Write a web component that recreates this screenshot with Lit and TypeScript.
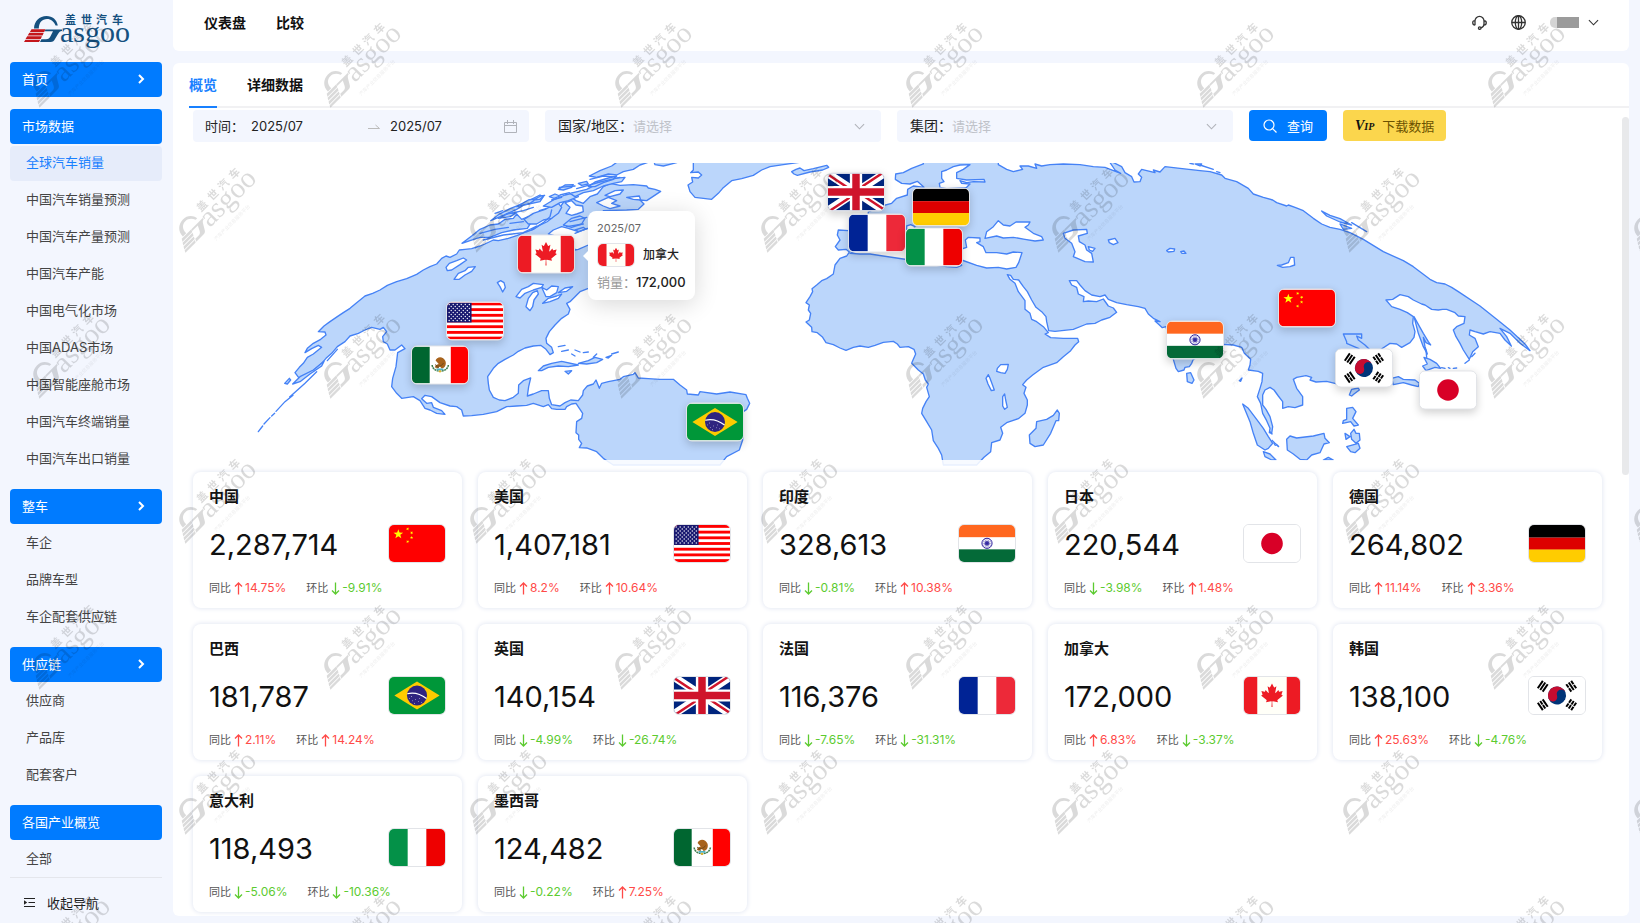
import { LitElement, html, css, svg } from "lit";
import { customElement, property } from "lit/decorators.js";
import { styleMap } from "lit/directives/style-map.js";
import { classMap } from "lit/directives/class-map.js";

type Change = number;
interface Country {
  code: string;
  name: string;
  sales: string;
  yoy: Change;
  mom: Change;
  /** centre of the pin on the map, in map units */
  x: number;
  y: number;
}

const MAP = { x: 193, y: 163, w: 1409, h: 309 };

const COUNTRIES: Country[] = [
  { code: "cn", name: "中国", sales: "2,287,714", yoy: 14.75, mom: -9.91, x: 1307, y: 308 },
  { code: "us", name: "美国", sales: "1,407,181", yoy: 8.2, mom: 10.64, x: 475, y: 321 },
  { code: "in", name: "印度", sales: "328,613", yoy: -0.81, mom: 10.38, x: 1195, y: 340 },
  { code: "jp", name: "日本", sales: "220,544", yoy: -3.98, mom: 1.48, x: 1448, y: 390 },
  { code: "de", name: "德国", sales: "264,802", yoy: 11.14, mom: 3.36, x: 941, y: 207 },
  { code: "br", name: "巴西", sales: "181,787", yoy: 2.11, mom: 14.24, x: 715, y: 422 },
  { code: "gb", name: "英国", sales: "140,154", yoy: -4.99, mom: -26.74, x: 856, y: 192 },
  { code: "fr", name: "法国", sales: "116,376", yoy: -7.65, mom: -31.31, x: 877, y: 233 },
  { code: "ca", name: "加拿大", sales: "172,000", yoy: 6.83, mom: -3.37, x: 546, y: 254 },
  { code: "kr", name: "韩国", sales: "138,100", yoy: 25.63, mom: -4.76, x: 1364, y: 368 },
  { code: "it", name: "意大利", sales: "118,493", yoy: -5.06, mom: -10.36, x: 934, y: 247 },
  { code: "mx", name: "墨西哥", sales: "124,482", yoy: -0.22, mom: 7.25, x: 440, y: 365 },
];

const NAV = [
  { title: "首页", arrow: true, items: [] as string[] },
  {
    title: "市场数据",
    arrow: false,
    items: ["全球汽车销量", "中国汽车销量预测", "中国汽车产量预测", "中国汽车产能", "中国电气化市场", "中国ADAS市场", "中国智能座舱市场", "中国汽车终端销量", "中国汽车出口销量"],
  },
  { title: "整车", arrow: true, items: ["车企", "品牌车型", "车企配套供应链"] },
  { title: "供应链", arrow: true, items: ["供应商", "产品库", "配套客户"] },
  { title: "各国产业概览", arrow: false, items: ["全部"] },
];

const star = (cx: number, cy: number, r: number, turn = 0) => {
  const pts: string[] = [];
  for (let i = 0; i < 10; i++) {
    const a = ((i * 36 - 90 + turn) * Math.PI) / 180;
    const q = i % 2 ? r * 0.4 : r;
    pts.push(`${(cx + q * Math.cos(a)).toFixed(2)},${(cy + q * Math.sin(a)).toFixed(2)}`);
  }
  return pts.join(" ");
};

const vertical = (a: string, b: string, c: string) => svg`
  <rect width="57" height="38" fill=${b}/><rect width="19" height="38" fill=${a}/><rect x="38" width="19" height="38" fill=${c}/>`;

const trigram = (x: number, y: number, turn: number, bars: number[]) => svg`
  <g transform=${`translate(${x} ${y}) rotate(${turn})`} fill="#000">
    ${bars.map((solid, i) => solid
      ? svg`<rect x="-4.6" y=${i * 3 - 4} width="9.2" height="2"/>`
      : svg`<rect x="-4.6" y=${i * 3 - 4} width="4.2" height="2"/><rect x="0.4" y=${i * 3 - 4} width="4.2" height="2"/>`)}
  </g>`;

const LEAF = "m4890 4430-45-863a95 95 0 0 1 111-98l859 151-116-320a65 65 0 0 1 20-73l941-762-212-99a65 65 0 0 1-34-79l186-572-542 115a65 65 0 0 1-73-38l-105-247-423 454a65 65 0 0 1-111-57l204-1052-327 189a65 65 0 0 1-91-27l-332-652-332 652a65 65 0 0 1-91 27l-327-189 204 1052a65 65 0 0 1-111 57l-423-454-105 247a65 65 0 0 1-73 38l-542-115 186 572a65 65 0 0 1-34 79l-212 99 941 762a65 65 0 0 1 20 73l-116 320 859-151a95 95 0 0 1 111 98l-45 863z";

const FLAGS: Record<string, () => unknown> = {
  cn: () => svg`<rect width="57" height="38" fill="#f00"/>
    <g fill="#ff0"><polygon points=${star(9.5, 9.5, 5.2)}/><polygon points=${star(19, 4, 1.8, 20)}/><polygon points=${star(23, 8, 1.8, 40)}/><polygon points=${star(23, 13, 1.8)}/><polygon points=${star(19, 17, 1.8, 20)}/></g>`,
  us: () => svg`<rect width="57" height="38" fill="#fff"/>
    ${[0, 1, 2, 3, 4, 5, 6].map((i) => svg`<rect y=${(i * 76) / 13} width="57" height=${38 / 13} fill="#f00"/>`)}
    <rect width="25" height="20.5" fill="#191970"/>
    ${[0, 1, 2, 3, 4, 5, 6, 7, 8].map((r) => (r % 2 ? [0, 1, 2, 3, 4] : [0, 1, 2, 3, 4, 5]).map((c) => svg`<circle cx=${2.2 + c * 4.1 + (r % 2 ? 2.05 : 0)} cy=${2 + r * 2.06} r="0.7" fill="#fff"/>`))}`,
  in: () => svg`<rect width="57" height="38" fill="#fff"/><rect width="57" height="12.5" fill="#ff671f"/><rect y="25" width="57" height="13" fill="#046a38"/>
    <circle cx="28.5" cy="18.8" r="5.2" fill="none" stroke="#2a1f9c" stroke-width="1"/><circle cx="28.5" cy="18.8" r="2.4" fill="#2a1f9c" fill-opacity=".75"/>
    <g stroke="#2a1f9c" stroke-width=".4">${[0, 30, 60, 90, 120, 150].map((a) => svg`<path d="M23.5 18.8h10" transform=${`rotate(${a} 28.5 18.8)`}/>`)}</g>`,
  jp: () => svg`<rect width="57" height="38" fill="#fff"/><circle cx="28.5" cy="19" r="11" fill="#d80027"/>`,
  de: () => svg`<rect width="57" height="13" fill="#000"/><rect y="13" width="57" height="12.5" fill="#d00"/><rect y="25.2" width="57" height="12.8" fill="#fc0"/>`,
  br: () => svg`<rect width="57" height="38" fill="#009739"/><path d="M5.5 19 28.5 4.5 51.5 19 28.5 33.5Z" fill="#fecb00"/><circle cx="28.5" cy="19" r="10.2" fill="#2f2480"/>
    <path d="M18.6 17.2c7-1.6 14 .6 19.6 5" fill="none" stroke="#fff" stroke-width="1.3"/>
    <g fill="#fff">${[[21, 22], [24, 24.5], [27, 23], [30, 25], [33, 26], [26, 27], [31, 22], [23, 20]].map(([x, y]) => svg`<circle cx=${x} cy=${y} r=".45"/>`)}</g>`,
  gb: () => svg`<rect width="57" height="38" fill="#00247d"/>
    <path d="M0 0 57 38M57 0 0 38" stroke="#fff" stroke-width="8"/>
    <path d="M0 1 28 19.7M57 37 29 18.3M57 -1.5 29 17.2M0 39.5 28 20.8" stroke="#cf142b" stroke-width="2.5"/>
    <path d="M28.5 0v38M0 19h57" stroke="#fff" stroke-width="12.5"/><path d="M28.5 0v38M0 19h57" stroke="#cf142b" stroke-width="7.6"/>`,
  fr: () => vertical("#002395", "#fff", "#ed2939"),
  it: () => vertical("#049148", "#fff", "#e00"),
  ca: () => svg`<rect width="57" height="38" fill="#fffff8"/><rect width="13.5" height="38" fill="#ed1b24"/><rect x="43.5" width="13.5" height="38" fill="#ed1b24"/>
    <path transform="translate(-.3 4.2) scale(.006)" d=${LEAF} fill="#ed1b24"/>`,
  kr: () => svg`<rect width="57" height="38" fill="#fff"/>
    <g transform="rotate(-20 28.5 19)"><circle cx="28.5" cy="19" r="9.2" fill="#003478"/><path d="M19.3 19a9.2 9.2 0 0 1 18.4 0a4.6 4.6 0 0 0-9.2 0a4.6 4.6 0 0 1-9.2 0Z" fill="#c60c30"/></g>
    ${trigram(14, 9.5, -56, [1, 1, 1])}${trigram(43, 9.5, 56, [0, 1, 0])}${trigram(14, 28.5, 56, [1, 0, 1])}${trigram(43, 28.5, -56, [0, 0, 0])}`,
  mx: () => svg`<rect width="57" height="38" fill="#fff"/><rect width="18" height="38" fill="#006630"/><rect x="39.5" width="17.5" height="38" fill="#f00"/>
    <path d="M20.5 19c.8 8.5 15.5 8.5 16.5 0" fill="none" stroke="#3f7d4e" stroke-width="1.6" stroke-dasharray="2 .6"/>
    <path d="M24 14.5c1-4.500 8-5 10 .5 1.300 3.500-.5 7.500-4 7.500-1-2.500-3.500-2-4.500.6-1-2-1.500-1.500-2.300-1 .2-2.500 2-3.500 4-4Z" fill="#a8631c"/>
    <path d="M23.500 18.500c2 2.500 7 2 8.500-1.500M24.500 20.500l3 1.500" fill="none" stroke="#6e4a1a" stroke-width="1"/>
    <path d="M25 23.500h7" stroke="#4fb3c4" stroke-width="1.800"/><circle cx="28.500" cy="25.500" r="1.200" fill="#e3b229"/>`,
};

@customElement("country-flag")
export class CountryFlag extends LitElement {
  @property() code = "cn";
  static styles = css`
    :host { display: block; box-sizing: border-box; width: 58px; height: 39px; border: 1px solid #e2e4e8; border-radius: 6px; overflow: hidden; background: #fff; }
    svg { display: block; width: 100%; height: 100%; }
  `;
  render() {
    return html`<svg viewBox="0 0 57 38" preserveAspectRatio="none" aria-hidden="true">${FLAGS[this.code]()}</svg>`;
  }
}

const emblem = (blue: string, red: string) => svg`
  <path fill=${blue} d="M34 28.500C34.200 21 39.500 16 46.500 16C52.500 16 56.800 19.800 57.800 25.500L55.600 25.500C53.800 21.500 51 19 47 19C42 19 39 22.500 38.800 28.500Z"/>
  <path fill=${blue} d="M45.500 29.400H62V31C60 31.200 59.300 31.800 58 34L55 39C54 41 53 42 50.500 42H40L41.400 39.200H46C48.500 39.200 49.500 38.200 50.500 36.200L53 31.200H44.700Z"/>
  <path fill=${red} d="M31.500 29.300H45.500L44.200 31.900H29.900ZM29.300 32.800H43.800L42.500 35.400H27.700ZM27.200 36.300H42L40.700 38.900H25.600ZM25.400 39.700H40.300L39 42.100H24Z"/>
  <text x="60" y="42" font-family="'Liberation Serif', serif" font-size="30" fill=${blue}>asgoo</text>
  <text x="65 81 96 112" y="24" font-family="'Noto Sans CJK SC', sans-serif" font-weight="700" font-size="11" fill=${blue}>盖世汽车</text>`;

const mark = (x: number, y: number) => svg`
  <g transform=${`translate(${x} ${y}) rotate(-45) scale(.97) translate(-25 -42)`}>
    ${emblem("#000", "#000")}
    <text x="55" y="56" font-family="'Noto Sans CJK SC', sans-serif" font-size="5" opacity=".5">汽车产业信息服务平台</text>
  </g>`;

const chevron = html`<svg class="chev" viewBox="0 0 12 12" aria-hidden="true"><path d="M1 3.500 6 8.500 11 3.500" /></svg>`;

/* Coast lines. Each sheet is drawn at three units to one map unit. */
const WEST_LAND = [
  "M135 668L148 652L160 640L172 622L190 612L215 592L205 586L185 596L165 608L172 595L190 580L212 568L228 555L225 546L205 545L222 528L240 515L262 500L280 488L300 475L320 458L345 438L368 430L390 420L412 406L440 395L470 386L500 373L520 360L540 350L560 342L575 325L588 318L600 322L620 312L628 300L645 298L665 296L690 288L705 282L730 270L745 272L775 265L800 257L828 246L850 238L868 226L890 216L905 205L915 180L930 172L945 150L960 140L978 152L1000 160L1020 140L1042 132L1060 110L1080 100L1110 106L1150 104L1190 108L1195 114L1215 118L1232 124L1205 142L1190 152L1170 150L1182 162L1165 178L1130 180L1060 182L1055 200L1130 220L1140 260L1120 300L1100 350L1060 390L1015 415L990 425L975 440L960 455L950 460L960 478L955 492L935 505L915 525L898 545L888 565L890 580L905 592L910 608L900 614L888 598L872 586L850 588L825 594L805 604L790 615L765 628L745 640L730 655L713 680L715 700L718 720L730 742L748 750L765 752L790 742L805 730L806 705L820 692L842 684L836 710L832 738L850 732L875 722L895 722L898 745L905 764L930 768L945 758L962 750L985 752L998 735L1000 722L1012 708L1030 702L1038 690L1048 715L1055 700L1075 695L1110 688L1120 680L1150 673L1155 668L1165 684L1195 686L1230 688L1270 688L1290 705L1310 720L1312 732L1345 735L1350 725L1400 732L1440 726L1488 734L1492 745L1499 760L1490 778L1480 785L1478 870L1468 900L1430 920L1410 945L1090 945L1060 925L1040 905L1010 894L988 893L995 880L986 868L986 855L978 848L980 815L995 805L998 790L988 775L978 760L965 762L950 770L945 778L920 778L905 776L895 764L880 770L850 760L830 766L800 768L770 770L740 785L700 793L665 797L640 798L635 780L620 770L600 768L570 758L545 740L525 736L515 746L530 760L545 758L550 772L575 782L585 793L560 790L540 780L525 775L510 752L490 740L455 745L440 730L425 710L428 685L438 650L443 608L465 596L455 585L435 600L420 600L412 582L400 575L398 560L410 545L400 532L390 538L365 532L345 540L325 550L300 558L285 575L262 590L245 610L228 625L215 640L190 662L165 675L150 688Z",
  "M636 280L665 258L690 238L720 225L745 222L765 208L790 205L800 192L815 208L835 200L845 215L832 235L790 240L755 248L720 262L690 262L660 272Z",
  "M722 212L760 196L800 178L822 165L870 155L880 140L870 135L820 160L780 176L745 194Z",
  "M822 208L850 190L885 178L905 168L925 160L935 172L925 190L905 205L880 210L860 222L835 222Z",
  "M880 168L910 150L945 135L975 128L985 140L955 152L930 158L905 172Z",
  "M925 118L945 105L970 104L965 112L940 120ZM898 140L915 132L930 138L912 145ZM985 100L1010 94L1015 102L995 106Z",
  "M1018 78L1050 62L1085 48L1110 30L1215 30L1170 45L1150 58L1120 65L1100 75L1075 72L1040 82Z",
  "M960 130L1010 118L1050 98L1090 85L1125 82L1115 95L1090 100L1060 108L1030 122L1000 128L975 140Z",
  "M1015 110L1035 96L1075 84L1100 78L1090 88L1060 98L1035 110ZM1210 30L1280 38L1240 48L1215 44Z",
  "M940 225L965 205L990 198L1005 205L995 222L965 232ZM975 240L1000 232L1010 240L990 246ZM973 285L983 281L986 290L977 296Z",
  "M1330 30L1330 60L1322 68L1345 66L1355 75L1345 84L1325 82L1328 96L1314 105L1320 125L1335 142L1360 145L1385 148L1405 130L1418 115L1445 92L1475 86L1510 76L1535 60L1560 50L1600 44L1655 36L1655 30Z",
  "M865 662L880 648L905 640L935 634L985 645L955 650L925 648L895 652L875 662ZM985 640L1015 632L1035 622L1058 628L1040 638L1010 642ZM945 664L965 662L955 672ZM1068 622L1085 616L1075 624Z",
  "M104 700L118 685L122 690L112 702Z",
  "M128 702L150 680L190 660L222 634L215 648L180 672L150 695Z",
  "M745 205L775 190L800 188L780 200ZM800 170L835 150L860 146L840 160ZM850 150L872 138L884 136L870 148Z",
];
const WEST_LINES = "M25 845L38 828M42 822L60 803M65 798L74 790M78 784L105 755L130 735L118 742L140 722L165 700L200 665M232 632L262 598M925 590L945 586M935 604L955 600M975 600L990 606M1000 608L1015 606M1030 622L1040 612M1085 612L1105 606M965 612L975 618M868 182L888 176M735 190L758 182M690 250L735 238L775 232M780 220L820 215M928 112L975 108M980 116L1050 96L1110 82M1020 88L1060 78L1090 80M930 135L958 128M905 150L935 142M770 192L820 182L850 172M845 240L880 218L900 200L905 180M700 270L760 255L820 248L860 228M960 215L1010 202M950 230L1000 222M975 250L1012 235";
const WEST_WATER = [
  "M895 252L910 240L935 230L955 235L985 245L1015 235L1030 260L1015 285L985 298L975 300L965 270L930 262Z",
  "M948 190L960 172L945 158L965 152L978 165L998 168L1000 185L980 192L965 196Z",
  "M1040 158L1075 142L1100 152L1085 160L1110 168L1080 176L1060 168ZM1065 136L1095 122L1120 120L1110 132L1080 140ZM1130 142L1168 138L1172 150L1150 148Z",
  "M588 352L598 340L620 332L640 324L650 330L630 344L605 360L592 362Z",
  "M612 388L625 370L645 362L655 352L676 350L665 364L645 375L628 388Z",
  "M742 398L752 392L762 398L766 412L758 426L750 410Z",
  "M798 440L815 418L835 410L850 400L880 404L875 412L850 420L825 430L810 444Z",
  "M828 470L835 445L848 428L862 422L865 432L852 450L848 470L840 482Z",
  "M875 412L890 420L905 408L925 410L920 428L900 440L888 440Z",
  "M878 460L895 445L920 438L935 432L925 445L900 455ZM925 428L945 414L968 410L950 424Z",
];
const EAST_LAND = [
  "M208 306L200 318L180 325L165 345L160 372L140 386L125 392L110 405L96 416L98 425L90 440L78 458L88 465L85 480L92 490L88 510L78 516L95 532L96 545L112 548L128 562L138 578L160 584L180 594L198 601L220 592L240 588L265 592L285 586L310 577L340 574L352 582L360 592L385 590L402 598L407 612L400 628L395 640L415 660L430 672L436 690L445 702L440 712L448 740L438 755L428 775L425 790L440 815L455 840L460 872L475 895L485 915L490 945L590 945L612 922L632 905L635 878L660 870L668 850L662 832L680 818L715 806L735 790L742 765L742 750L732 730L738 712L728 704L740 690L758 675L790 652L830 638L850 620L872 602L885 585L896 575L893 565L850 565L812 563L795 552L805 548L790 530L770 515L755 508L750 490L735 478L735 452L715 425L705 400L690 388L682 374L692 376L700 388L716 390L730 410L742 425L755 450L768 472L785 485L798 500L800 515L806 542L825 544L880 538L920 522L945 520L965 510L990 502L1010 487L1000 474L985 468L970 447L950 455L925 453L910 455L912 440L895 432L890 412L875 405L868 392L890 392L900 405L915 422L935 435L960 440L975 435L985 448L1010 458L1040 464L1075 470L1095 475L1105 492L1120 505L1140 515L1125 513L1135 522L1147 533L1158 530L1180 628L1188 655L1195 665L1212 660L1215 652L1228 650L1235 640L1240 628L1328 583L1360 585L1385 592L1393 610L1412 628L1410 645L1405 660L1435 664L1448 670L1446 695L1440 715L1432 740L1442 760L1448 790L1460 812L1470 835L1468 848L1475 850L1478 830L1470 800L1458 778L1448 765L1448 735L1455 720L1470 712L1482 720L1495 738L1508 755L1508 775L1525 770L1545 773L1568 765L1568 740L1550 715L1540 688L1550 682L1578 677L1595 682L1590 690L1608 696L1640 694L1680 704L1740 650L1770 610L1768 598L1755 585L1735 570L1730 558L1745 565L1745 552L1690 552L1700 575L1700 580L1735 595L1780 640L1800 600L1830 580L1850 582L1865 592L1890 578L1902 562L1905 545L1898 520L1900 500L1882 488L1860 478L1835 470L1818 450L1838 448L1860 434L1885 440L1900 450L1925 462L1935 465L1955 478L1975 480L1988 478L2000 478L2025 488L2035 498L2055 500L2052 520L2030 530L2020 540L2028 560L2040 580L2050 600L2068 628L2078 605L2095 590L2085 565L2068 555L2070 540L2085 545L2110 552L2130 545L2160 550L2175 570L2194 588L2180 560L2160 535L2190 550L2220 580L2250 602L2235 582L2190 540L2150 508L2100 468L2035 425L2015 412L1995 402L1970 398L1950 388L1900 350L1870 332L1810 305L1750 268L1710 248L1680 238L1650 232L1625 222L1600 205L1570 182L1545 172L1525 165L1520 168L1490 158L1478 150L1450 142L1420 132L1405 115L1370 95L1335 85L1325 75L1290 65L1260 62L1200 55L1155 50L1140 66L1120 60L1125 68L1085 58L1075 72L1085 82L1080 95L1062 96L1055 80L1035 68L1025 50L985 30L1005 60L1022 70L975 52L940 50L900 44L850 42L810 44L785 48L765 42L770 55L745 48L720 48L728 58L700 65L680 58L655 44L655 30L430 30L430 42L395 55L370 68L347 72L346 88L365 100L390 102L412 94L432 112L400 108L383 118L382 135L350 145L335 160L305 168L265 186L262 230L205 242L175 240L172 255L180 270L166 290L175 300L198 298Z",
  "M35 65L48 58L60 54L72 62L100 56L140 46L146 52L128 60L90 66L52 76L42 72Z",
  "M748 855L768 835L770 815L800 808L820 796L832 780L838 790L836 812L828 812L812 850L790 885L765 890L750 880Z",
  "M1220 670L1232 668L1242 690L1236 700L1222 695Z",
  "M1388 762L1405 775L1430 808L1450 835L1465 860L1478 880L1465 895L1455 900L1432 885L1420 850L1410 815Z",
  "M1450 905L1470 912L1488 930L1475 930L1455 920ZM1475 870L1485 880L1495 888",
  "M1520 868L1530 858L1550 864L1600 858L1632 850L1635 865L1648 878L1632 882L1620 908L1595 915L1580 930L1560 928L1540 912L1522 900Z",
  "M1700 775L1718 772L1728 785L1718 805L1735 825L1722 828L1712 815L1688 820L1690 812L1700 808ZM1695 850L1710 860L1698 868ZM1712 850L1722 838L1728 850L1738 850L1740 870L1728 880L1715 868ZM1700 890L1735 880L1740 895L1725 908L1712 905Z",
  "M1708 735L1715 718L1735 714L1738 720L1722 732L1715 738ZM1630 930L1645 922L1660 930Z",
  "M1902 500L1912 518L1930 550L1945 575L1952 585L1938 578L1930 562L1935 590L1942 612L1930 590L1915 550Z",
  "M1932 622L1950 628L1970 640L1982 655L1965 652L1938 662L1928 648L1942 642ZM1835 685L1855 680L1870 688L1905 690L1918 700L1915 710L1895 705L1870 698L1840 704Z",
  "M1625 183L1650 196L1680 206L1715 225L1680 216L1640 198ZM1680 222L1715 235L1690 238ZM1378 692L1386 684L1382 694ZM1245 42L1265 42L1260 48Z",
];
const EAST_LINES = "M1715 218L1760 245M1985 653L1995 655M2005 653L2010 655M2020 655L2030 654M2055 640L2068 630M2075 620L2085 610M1938 600L1940 622M1260 45L1300 58M1310 65L1320 68M1230 40L1240 42M1470 845L1476 852M1482 880L1486 886M1490 885L1496 890";
const EAST_WATER = [
  "M540 45L520 50L500 60L485 65L485 85L492 95L478 100L480 112L500 116L560 112L570 102L545 100L540 92L560 98L580 95L615 96L612 88L560 90L530 85L530 68L550 58L570 44Z",
  "M615 265L620 245L640 230L655 212L670 225L690 228L708 216L750 216L745 225L735 232L760 250L785 260L790 270L765 273L735 268L700 262L670 264L650 258Z",
  "M850 250L880 240L920 238L922 250L895 258L898 275L915 285L920 300L935 310L940 336L915 335L880 320L885 305L875 280L855 265Z",
  "M925 290L945 295L938 304L928 300ZM985 270L1005 265L1014 278L1000 284L988 278ZM1160 302L1170 295L1184 297L1182 304L1165 306ZM1202 305L1212 303L1218 310L1206 310Z",
  "M535 300L560 292L556 270L565 262L600 264L600 275L590 278L610 290L618 308L650 308L680 312L700 306L726 308L716 338L708 352L680 357L655 352L620 354L590 346L545 330Z",
  "M210 310L250 296L380 288L390 330L270 312L240 312ZM470 346L500 350L530 352L545 346L540 330L470 330ZM380 228L392 224L405 230L400 240L380 240Z",
  "M652 655L662 644L685 643L682 658L675 670L662 668L650 664ZM618 685L625 674L630 685L643 720L634 722L624 702ZM668 740L674 732L677 750L682 772L674 778L668 768Z",
  "M1492 346L1505 345L1525 338L1532 322L1542 322L1544 345L1530 350L1508 352Z",
];

@customElement("sales-map")
export class SalesMap extends LitElement {
  static styles = css`
    :host { display: block; }
    .stage { position: relative; width: 100%; aspect-ratio: 1409 / 309; }
    .world { display: block; width: 100%; height: 100%; }
    .land { fill: #bbd6fb; stroke: #4582f6; stroke-width: 4; stroke-linejoin: round; }
    .water { fill: #fff; stroke: #4582f6; stroke-width: 4; stroke-linejoin: round; }
    .line { fill: none; stroke: #4582f6; stroke-width: 4; stroke-linecap: round; }
    .pin { position: absolute; transform: translate(-50%, -50%); border-radius: 6px; box-shadow: 0 3px 8px rgba(0, 0, 0, 0.18); }
    .tip { position: absolute; box-sizing: border-box; padding: 9px; padding-bottom: 8px; background: #fff; border-radius: 8px; box-shadow: 0 4px 24px rgba(0, 0, 0, 0.16); color: #222; }
    .tip::before { content: ""; position: absolute; left: -5px; top: 40px; border: 5px solid transparent; border-left-width: 0; border-right-color: #fff; }
    .date { font-size: 11px; line-height: 16px; color: #666; }
    .who { display: flex; align-items: center; gap: 8px; margin: 7px 0 5px; font-size: 12px; font-weight: 500; line-height: 24px; }
    .who country-flag { width: 38px; height: 24px; }
    .sum { display: flex; font-size: 13px; line-height: 20px; white-space: nowrap; }
    .sum span { color: #999; }
    .sum b { font-weight: 500; }
  `;
  private at(x: number, y: number) {
    return styleMap({ left: `${((x - MAP.x) / MAP.w) * 100}%`, top: `${((y - MAP.y) / MAP.h) * 100}%` });
  }
  render() {
    const order = ["gb", "fr", "de", "it", "ca", "us", "mx", "br", "in", "cn", "kr", "jp"];
    return html`<div class="stage">
      <svg class="world" viewBox="193 163 1409 309" role="img" aria-label="全球汽车销量">
        <g transform="translate(250 150) scale(.33333)">
          ${WEST_LAND.map((d) => svg`<path class="land" d=${d}/>`)}
          ${WEST_WATER.map((d) => svg`<path class="water" d=${d}/>`)}
          <path class="line" d=${WEST_LINES}/>
        </g>
        <g transform="translate(780 150) scale(.33333)">
          ${EAST_LAND.map((d) => svg`<path class="land" d=${d}/>`)}
          ${EAST_WATER.map((d) => svg`<path class="water" d=${d}/>`)}
          <path class="line" d=${EAST_LINES}/>
        </g>
        <rect x="193" y="460" width="1409" height="8" fill="#fff" fill-opacity=".88"/>
      </svg>
      ${order.map((code) => {
        const c = COUNTRIES.find((k) => k.code === code)!;
        return html`<country-flag class="pin" role="img" aria-label=${c.name} code=${code} style=${this.at(c.x, c.y)}></country-flag>`;
      })}
      <div class="tip" role="tooltip" style=${this.at(588, 211)}>
        <div class="date">2025/07</div>
        <div class="who"><country-flag code="ca"></country-flag>加拿大</div>
        <div class="sum"><span>销量：</span><b>172,000</b></div>
      </div>
    </div>`;
  }
}

@customElement("sales-card")
export class SalesCard extends LitElement {
  @property({ attribute: false }) country!: Country;
  static styles = css`
    :host { display: block; box-sizing: border-box; padding: 14px 16px 12px; background: #fff; border-radius: 8px; box-shadow: 0 0 4px 1px #e6eaf4; }
    h3 { margin: 0; font-size: 15px; line-height: 21px; font-weight: 600; color: #141414; }
    .row { display: flex; align-items: center; justify-content: space-between; margin: 17px 0; height: 39px; }
    .num { padding-top: 2px; font-size: 29px; font-weight: 400; color: #111; }
    .rates { display: flex; gap: 20px; font-size: 12px; line-height: 16px; white-space: nowrap; }
    .rate { display: flex; align-items: center; gap: 3px; }
    .rate i { font-style: normal; font-size: 11px; color: #555; }
    .rate svg { width: 9px; height: 13px; fill: none; stroke: currentColor; stroke-width: 1.3; }
    .up { color: #ff4a48; }
    .down { color: #5ccb30; }
    .rate span { display: flex; align-items: center; gap: 2px; }
  `;
  private rate(label: string, v: number) {
    return html`<div class="rate"><i>${label}</i><span class=${v > 0 ? "up" : "down"}>
      <svg viewBox="0 0 9 13" aria-hidden="true"><path d=${v > 0 ? "M4.500 12.500V1.500M1 4.500 4.500 1 8 4.500" : "M4.500.5V11.500M1 8.500 4.500 12 8 8.500"}/></svg>${v}%</span></div>`;
  }
  render() {
    const c = this.country;
    return html`<h3>${c.name}</h3>
      <div class="row"><span class="num">${c.sales}</span><country-flag code=${c.code}></country-flag></div>
      <div class="rates">${this.rate("同比", c.yoy)}${this.rate("环比", c.mom)}</div>`;
  }
}

@customElement("app-root")
export class AppRoot extends LitElement {
  static styles = css`
    :host { display: block; position: relative; min-height: 100vh; background: #f3f6fe; color: #222; font-family: Inter, "Noto Sans CJK SC", sans-serif; font-size: 13px; }
    * { box-sizing: border-box; }
    a { color: inherit; text-decoration: none; }
    button, input, select { font: inherit; color: inherit; border: 0; background: none; padding: 0; margin: 0; }
    button { cursor: pointer; }
    .layout { display: grid; grid-template-columns: 173px minmax(0, 1fr); min-height: 100vh; }

    .side { display: flex; flex-direction: column; padding: 0 11px 0 10px; }
    .logo { display: block; height: 62px; }
    .logo svg { display: block; width: 130px; height: 62px; }
    .nav { flex: 1; display: flex; flex-direction: column; gap: 12px; }
    .group { display: flex; flex-direction: column; gap: 2px; }
    .head { display: flex; align-items: center; justify-content: space-between; height: 35px; padding: 0 17px 2px 12px; border-radius: 4px; background: #007bff; color: #fff; }
    .head svg { width: 8px; height: 10px; fill: none; stroke: #fff; stroke-width: 2; }
    .item { height: 35px; line-height: 33px; padding-left: 16px; border-radius: 4px; color: #444; }
    .item.on { background: #e6ecfa; color: #1880ff; }
    .fold { display: flex; align-items: center; gap: 12px; height: 46px; padding: 4px 0 0 14px; border-top: 1px solid #e4e6ec; color: #222; }
    .fold svg { width: 11px; height: 11px; }

    .main { display: flex; flex-direction: column; padding-right: 11px; padding-bottom: 7px; }
    .top { display: flex; align-items: center; justify-content: space-between; height: 51px; padding: 0 30px 6px 31px; background: #fff; border-radius: 0 0 6px 6px; }
    .menu { display: flex; gap: 30px; padding-bottom: 2px; font-size: 14px; font-weight: 600; color: #111; }
    .tools { display: flex; align-items: center; gap: 24px; }
    .tools button { display: flex; align-items: center; }
    .tools .ico { width: 15px; height: 15px; fill: none; stroke: #333; stroke-width: 1.2; }
    .user { gap: 9px; }
    .user i { width: 29px; height: 11px; border-radius: 5px 0 0 5px; background: linear-gradient(90deg, #d4d4d4 7px, #9b9b9b 7px); }
    .chev { width: 11px; height: 11px; fill: none; stroke: #333; stroke-width: 1.2; }

    .panel { position: relative; flex: 1; margin-top: 12px; background: #fff; border-radius: 6px; }
    .tabs { display: flex; gap: 30px; height: 45px; margin-left: 16px; border-bottom: 2px solid #f1f1f3; font-size: 14px; font-weight: 600; line-height: 44px; color: #111; }
    .tabs a { height: 45px; border-bottom: 2px solid transparent; }
    .tabs a.on { color: #1880ff; border-color: #1880ff; }
    .body { padding: 2px 27px 4px 20px; }
    .filters { display: flex; gap: 16px; }
    .field { display: flex; align-items: center; flex: 1 1 0; max-width: 336px; height: 32px; padding: 0 12px; border-radius: 4px; background: #f3f6fe; }
    .field label { padding-bottom: 2px; white-space: nowrap; color: #222; }
    .field input { width: 60px; }
    .field .start { margin-left: 7px; }
    .field .end { margin-left: 10px; }
    .field .swap { width: 12px; height: 8px; margin-left: auto; fill: none; stroke: #bbb; }
    .field .cal { width: 13px; height: 13px; margin-left: 54px; fill: none; stroke: #b0b3ba; }
    .field.pick { padding: 0 16px 0 13px; }
    .field.pick label { font-size: 14px; }
    .field select { flex: 1; min-width: 0; appearance: none; color: #bfc2c9; outline: none; }
    .field .chev { stroke: #b0b3ba; }
    .btn { display: flex; align-items: center; justify-content: center; height: 31px; border-radius: 4px; }
    .query { gap: 10px; padding: 0 14px; background: #007bff; color: #fff; }
    .query svg { width: 14px; height: 14px; fill: none; stroke: #fff; stroke-width: 1.2; }
    .vip { gap: 8px; padding: 0 12px; background: #fbd64d; color: #6b5200; }
    .vip b { font: italic bold 14px "Liberation Serif", serif; color: #111; }
    .vip small { font-size: 10px; }
    sales-map { margin: 21px 0 0; }
    .cards { position: relative; display: grid; grid-template-columns: repeat(5, minmax(0, 1fr)); gap: 16px; }
    .thumb { position: absolute; right: 0; top: 54px; width: 7px; height: 42%; border-radius: 4px; background: #e8e9eb; }
    .water { position: absolute; inset: 0; width: 100%; height: 100%; pointer-events: none; opacity: 0.14; }
  `;

  render() {
    return html`
      <div class="layout">
        <aside class="side">
          <a class="logo" href="#" aria-label="盖世汽车 Gasgoo"><svg viewBox="10 0 130 62">${emblem("#15507f", "#c4161c")}</svg></a>
          <nav class="nav">
            ${NAV.map((g) => html`<div class="group">
              <a class="head" href="#">${g.title}${g.arrow ? html`<svg viewBox="0 0 8 10" aria-hidden="true"><path d="M2 1 6 5 2 9"/></svg>` : ""}</a>
              ${g.items.map((t) => html`<a href="#" class=${classMap({ item: true, on: t === "全球汽车销量" })}>${t}</a>`)}
            </div>`)}
          </nav>
          <button class="fold"><svg viewBox="0 0 11 11" aria-hidden="true"><path d="M0 1.500h11M4.500 5.500H11M0 9.500h11" stroke="#222" stroke-width="1.200"/><path d="M0 3.200 3.200 5.500 0 7.800Z" fill="#222"/></svg>收起导航</button>
        </aside>
        <div class="main">
          <header class="top">
            <nav class="menu"><a href="#">仪表盘</a><a href="#">比较</a></nav>
            <div class="tools">
              <button aria-label="客服"><svg class="ico" viewBox="0 0 14 14"><path d="M2.800 9.500V5.500a4.200 4.200 0 0 1 8.400 0V8.500c0 2-1.200 3-2.800 3.600M2.800 5.200C1.200 5.200.7 6 .7 7.200s.6 2.200 2.100 2.200M11.200 5.200c1.600 0 2.100.8 2.100 2s-.6 2.200-2.100 2.200"/><circle cx="7.200" cy="12.200" r="1.200"/></svg></button>
              <button aria-label="语言"><svg class="ico" viewBox="0 0 14 14"><circle cx="7" cy="7" r="6.300"/><ellipse cx="7" cy="7" rx="3" ry="6.300"/><path d="M.7 7h12.600M7 .7v12.600"/></svg></button>
              <button class="user" aria-label="账户"><i></i>${chevron}</button>
            </div>
          </header>
          <main class="panel">
            <nav class="tabs"><a class="on" href="#">概览</a><a href="#">详细数据</a></nav>
            <div class="body">
              <form class="filters" @submit=${(e: Event) => e.preventDefault()}>
                <div class="field">
                  <label for="from">时间：</label><input class="start" id="from" value="2025/07" />
                  <svg class="swap" viewBox="0 0 12 8" aria-hidden="true"><path d="M0 6.500h11.500L7.500 3"/></svg>
                  <input class="end" aria-label="结束时间" value="2025/07" />
                  <svg class="cal" viewBox="0 0 13 13" aria-hidden="true"><path d="M.5 2.500h12v10H.5ZM.5 5.500h12M3.500 0v4M9.500 0v4"/></svg>
                </div>
                <div class="field pick"><label for="area">国家/地区：</label><select id="area"><option>请选择</option></select>${chevron}</div>
                <div class="field pick"><label for="maker">集团：</label><select id="maker"><option>请选择</option></select>${chevron}</div>
                <button class="btn query"><svg viewBox="0 0 14 14" aria-hidden="true"><circle cx="6" cy="6" r="5"/><path d="M9.600 9.600 13.500 13.500"/></svg>查询</button>
                <button class="btn vip" type="button"><b>V<small>IP</small></b>下载数据</button>
              </form>
              <sales-map></sales-map>
              <section class="cards">${COUNTRIES.map((c) => html`<sales-card .country=${c}></sales-card>`)}</section>
            </div>
            <div class="thumb" aria-hidden="true"></div>
          </main>
        </div>
      </div>
      <svg class="water" aria-hidden="true">
        <defs><pattern id="tile" width="291" height="291" patternUnits="userSpaceOnUse">
          ${mark(40, 107)}${mark(186, 252)}
        </pattern></defs>
        <rect width="100%" height="100%" fill="url(#tile)"/>
      </svg>`;
  }
}
